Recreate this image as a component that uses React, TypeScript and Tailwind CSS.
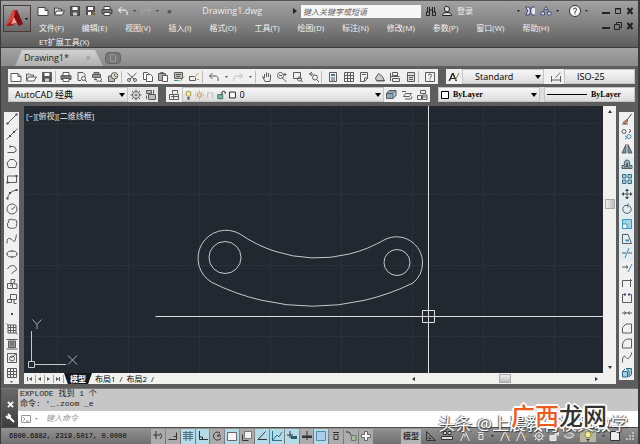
import { ReactNode } from "react";

interface IShape {
  d: string;
  fill?: string;
  stroke?: string;
}

const BLUE = "#3b93b5";
const LIGHT_BLUE = "#9fd3e6";

const shapes: Record<string, IShape[]> = {
  new: [{ d: "M1 2.5h7l3 3v5H1z", fill: "#fafafa" }, { d: "M8 2.5v3h3" }],
  open: [
    { d: "M1.5 10V3h3l1 1h3v2", fill: "#ddd" },
    { d: "M1.5 10l2-4h8l-2.500 4z", fill: "#fafafa" },
  ],
  save: [
    { d: "M1.500 1.500h9v9h-9z", fill: "#555" },
    { d: "M3.500 2h5v3h-5z", fill: "#fff", stroke: "none" },
    { d: "M4 7.500h4v3H4z", fill: "#ccc", stroke: "none" },
  ],
  saveAs: [
    { d: "M1.500 1.500h8v8h-8z", fill: "#555" },
    { d: "M3 2h5v3H3zM3 7h3v3H3z", fill: "#fff", stroke: "none" },
    { d: "M11 5.500l-4 5", stroke: "#d98a2b" },
  ],
  print: [
    { d: "M3 4.500v-3h6v3", fill: "#fff" },
    { d: "M1 4.500h10v4H1z", fill: "#777" },
    { d: "M3 7.500h6v3H3z", fill: "#fff" },
  ],
  preview: [
    { d: "M2 1.500h5l2 2v2M2 1.500v8h3" },
    { d: "M7.500 5.500a2 2 0 1 1 0 4a2 2 0 1 1 0-4M9 9l2 2" },
  ],
  publish: [
    { d: "M3 3.500v-2h5v2M1.500 3.500h8v3h-8z", fill: "#999" },
    { d: "M3 8.500h3M7.500 6.500a2 2 0 1 1 0 3.500a2 2 0 1 1 0-3.500M9 9.500l2 1.500" },
  ],
  print3d: [
    { d: "M1.500 5h6v5.500h-6z", fill: "#bbb" },
    { d: "M7.500 1.500a3 3 0 1 1 0 6.500a3 3 0 1 1 0-6.500z", fill: "#e8dfca" },
    { d: "M7.500 3v2l2 1" },
  ],
  cut: [
    { d: "M1.500 2l7 6.500M10.500 2l-7 6.500" },
    { d: "M1.500 9a1.500 1.500 0 1 1 3 0a1.500 1.500 0 1 1-3 0M7.500 9a1.500 1.500 0 1 1 3 0a1.500 1.500 0 1 1-3 0" },
  ],
  copy: [
    { d: "M1.500 1.500h4l2 2v5h-6z", fill: "#fff" },
    { d: "M4.500 3.500h4l2 2v5h-6z", fill: "#fff" },
  ],
  paste: [
    { d: "M1.500 2.500h7v7h-7zM3.500 1.500h3", fill: "#aaa" },
    { d: "M5.500 4.500h5v6h-5z", fill: "#fff" },
  ],
  match: [
    { d: "M1.500 1.500h8v6h-8z", fill: "#bbb" },
    { d: "M3 3.500h5M3 5.500h4" },
    { d: "M1 9.500h5", stroke: BLUE },
    { d: "M11 5.500l-4 5", stroke: "#b08a3a" },
  ],
  block: [
    { d: "M1.500 9.500v-4h5M1.500 9.500h6v-3" },
    { d: "M10.500 2l-4 4M9 8.500h2", stroke: "#c09040" },
  ],
  undo: [{ d: "M4.500 2L1.500 5l3 3M1.500 5H7q4 0 3 5" }],
  redo: [{ d: "M7.500 2l3 3l-3 3M10.500 5H5q-4 0-3 5" }],
  pan: [{ d: "M3.500 7V3M5.500 6V1.500M7.500 6V2M9.500 7V3.500M3.500 7L1.500 5.500l2.500 5h5l.5-3.500", fill: "#eee" }],
  zoom: [
    { d: "M4.500 1.500a3 3 0 1 1 0 6a3 3 0 1 1 0-6M6.500 7l4 4M3 4.500h3M9 2v3M7.500 3.500h3" },
  ],
  zoomWindow: [{ d: "M1.500 1.500h7v6h-7z" }, { d: "M7.500 6a2 2 0 1 1 0 4a2 2 0 1 1 0-4M9 9.500l2 1.500" }],
  zoomPrev: [
    { d: "M4 1L1.500 3L4 5M1.500 3h4" },
    { d: "M7 4a2.500 2.500 0 1 1 0 5a2.500 2.500 0 1 1 0-5M8.500 8.500l2.500 2.500" },
  ],
  props: [
    { d: "M2.500 1.500h7v9h-7z", fill: "#eee" },
    { d: "M4 3h4v2H4z", fill: "#48759a", stroke: "none" },
    { d: "M4 7h4M4 9h4" },
  ],
  center: [{ d: "M1.500 1.500h9v9h-9zM4.500 1.500v9M7.500 1.500v9M1.500 4.500h9M1.500 7.500h9" }],
  palettes: [{ d: "M2.500 1.500h7v6l-3 3h-4zM6.500 10v-3h3M4 3.500h4" }],
  sheets: [{ d: "M1.500 7l3-4.500l4 3l2 4.500h-8z", fill: "#ccc" }, { d: "M3 9.500h8" }],
  markup: [{ d: "M3.500 1.500h5v3h-5zM1.500 5.500h9M3.500 7.500h7v3h-7zM1.500 2v8" }],
  calc: [{ d: "M2.500 1.500h7v9h-7z", fill: "#ddd" }, { d: "M2.500 4.500h7M4 6.500h4M4 8.500h4" }],
  help: [{ d: "M1.500 1.500h9v9h-9z" }, { d: "M4.500 4.500q0-1.500 1.500-1.500t1.500 1.500t-1.500 2V7.500M6 8.500v1" }],
  styleA: [
    { d: "M1 10L4.500 2L8 10M2.500 7.500h4" },
    { d: "M1.500 10L5 2L8.500 10" },
    { d: "M11 2L7.500 9", stroke: "#8b7c4e" },
  ],
  dim: [{ d: "M1.500 5v6M10.500 5v6M1.500 9h9" }, { d: "M10 1.500L5.500 7", stroke: "#6c7f8b" }],
  gear: [
    { d: "M6 2.500a3.500 3.500 0 1 1 0 7a3.500 3.500 0 1 1 0-7M6 .5v2M6 9.500v2M.5 6h2M9.500 6h2M2 2l1.500 1.500M8.500 8.500L10 10M2 10l1.500-1.500M8.500 3.500L10 2" },
    { d: "M6 5a1 1 0 1 1 0 2a1 1 0 1 1 0-2" },
  ],
  workspace: [{ d: "M1.500 1.500h5v3h-5zM3.500 5.500h7v5h-7z", fill: "#bbb" }, { d: "M8.500 1v4M1.500 6.500v3.500" }],
  layers: [{ d: "M4.500 4.500v-3h5v3M1.500 5.500h4v5h-4zM5.500 5.500h5v5h-5zM3 7.500h7" }],
  bulb: [
    { d: "M6 1.500q3 0 3 3q0 1.500-1.500 3h-3Q3 6 3 4.500q0-3 3-3z", fill: "#f5ef9a", stroke: "#8a8640" },
    { d: "M4.500 9.500h3M5 11h2" },
  ],
  sun: [
    { d: "M6 3.500a2.500 2.500 0 1 1 0 5a2.500 2.500 0 1 1 0-5z", fill: "#f6ddb6", stroke: "#a88b63" },
    { d: "M6 .5v1.500M6 10v1.500M.5 6H2M10 6h1.500M2 2l1 1M9 9l1 1M2 10l1-1M9 3l1-1", stroke: "#a88b63" },
  ],
  viewport: [{ d: "M2.500 3.500h6v6M2.500 3.500v6", stroke: "#c3b3bb" }],
  unlock: [
    { d: "M1.500 5.500h6v5h-6z", fill: "#79b8aa", stroke: "#39645c" },
    { d: "M6.500 5.500v-3q2-2 4 0v2" },
  ],
  square: [{ d: "M2.500 2.500h7v7h-7z", fill: "#fff" }],
  layerBack: [{ d: "M4 1.500h7l-3 3H1.500zM1.500 4.500H8v5H1.500zM8 9.500l3-3v-5", fill: "#87a9bd" }],
  layerPrev: [{ d: "M1 2.500h4M4.500 4.500h6l-2 3h-6zM4 10h6l1-2.500" }],
  layerState: [{ d: "M4.500 1.500h5v3h-5zM1.500 6.500h4v4h-4zM6.500 6h4.500v4.500H6.500zM6.500 8h4" }],
  line: [{ d: "M1.500 10.500l9-9" }, { d: "M.5 9.500h2v2h-2zM9.500.5h2v2h-2z", fill: "#444", stroke: "none" }],
  xline: [{ d: "M.5 11.500l11-11" }, { d: "M3 7h2v2H3zM7 3h2v2H7z", fill: "#444", stroke: "none" }],
  pline: [{ d: "M1.500 9.500H8q3-1 2-3.500T7 3.500H4M4 2v3" }],
  polygon: [{ d: "M4 1.500h4l3 3.500l-1.500 4.500h-7L1 5z" }],
  rect: [{ d: "M1.500 3h9v6.500h-9z" }, { d: "M.5 8.500h2v2h-2zM9.500 2h2v2h-2z", fill: "#444", stroke: "none" }],
  arc: [{ d: "M1.500 10.500q1-7 9-8.500" }, { d: "M.5 9.500h2v2h-2zM3 4h2v2H3zM9.500 1h2v2h-2z", fill: "#444", stroke: "none" }],
  circle: [{ d: "M6 1a5 5 0 1 1 0 10a5 5 0 1 1 0-10M6 5.500v1M6 6l3-2" }],
  cloud: [{ d: "M3 4Q1 1.500 4 1.500q2-1 3 .5q4-1 3.500 2q1 2 0 3q0 4-3.500 3q-2 1-3 0q-3 0-2.500-3Q.5 5 3 4z" }],
  spline: [{ d: "M1 10.500Q1 4 4 5.500t4 3T10.500 1.500" }],
  ellipse: [{ d: "M6 3q5 0 5 3T6 9T1 6t5-3M6 2v2M6 8v2M.5 6h1M10.500 6h1" }],
  ellipseArc: [{ d: "M1.500 6Q3 2.500 6.500 2.500T10.500 7L7.500 9M5.500 10.500l2-1.500" }],
  insert: [{ d: "M1.500 5.500h5v5h-5zM5 5V1.500h4L8 6h3v4.500H7M4 8l4-3.500" }],
  makeBlock: [{ d: "M4.500 1.500h6v5h-6zM1.500 6.500h4v3h-4zM8 6v4.500h2.500" }],
  point: [{ d: "M5 5h2v2H5z", fill: "#444", stroke: "none" }],
  hatch: [{ d: "M2 2h8v8H2zM2 4.500h8M2 7.500h8M4.500 2v8M7.500 2v8M.5 .5l1.500 1.500M10 10l1.500 1.500" }],
  gradient: [{ d: "M2.500 3h7v6.500h-7z", fill: "#999" }, { d: "M.5 1.500h11M.5 11h11M4 5h4M4 7h4" }],
  region: [{ d: "M1.500 1.500h9v9h-9z" }, { d: "M6 4a2.500 2.500 0 1 1 0 5a2.500 2.500 0 1 1 0-5M5 6l5-4" }],
  table: [{ d: "M1.500 1.500h9v9h-9zM1.500 4.500h9M1.500 7.500h9M4.500 1.500v9M7.500 1.500v9" }],
  erase: [
    { d: "M10.500 1L6 7", stroke: "#5f4c3a" },
    { d: "M6 6.500l-4 3l2 1.500l3-3z", fill: "#d68a70", stroke: "#8e5c48" },
    { d: "M1 11h6" },
  ],
  copyObj: [
    { d: "M3 1.500a2 2 0 1 1 0 4a2 2 0 1 1 0-4M8 1.500a1.500 1.500 0 1 1 0 3" },
    { d: "M8 6.500a2 2 0 1 1 0 4a2 2 0 1 1 0-4M4 8a1.500 1.500 0 1 1 0 3", stroke: BLUE },
  ],
  mirror: [{ d: "M5 1.500V10H1zM7 1.500V10h4z", fill: "#6f949f" }],
  offset: [
    { d: "M1 10.500v-3h2.500q-1-5.500 2.500-5.500t2.500 5.500H11v3z", fill: "#8db3be" },
    { d: "M3 9h2.500V5.500h1V9H9" },
  ],
  array: [{ d: "M1.500 1.500h3.500v3.500H1.500zM7 1.500h3.500v3.500H7zM1.500 7h3.500v3.500H1.500zM7 7h3.500v3.500H7z", fill: LIGHT_BLUE, stroke: "#366b80" }],
  move: [
    { d: "M6 2v8M2 6h8" },
    { d: "M6 .5l2 2.500H4zM6 11.500L4 9h4zM.5 6L3 4v4zM11.500 6L9 8V4z", fill: "#444", stroke: "none" },
  ],
  rotate: [{ d: "M8 2.500a4.200 4.200 0 1 1-4 0M4 2.500h3M7 .5v4" }],
  scale: [{ d: "M1.500 1.500h9v9h-9z", fill: LIGHT_BLUE, stroke: BLUE }, { d: "M1.500 6h4.500v4.500H1.500z", fill: "#fff", stroke: BLUE }],
  stretch: [{ d: "M1.500 1.500H7l3.500 9h-9z" }, { d: "M4 6.500h4v2H5z", fill: BLUE, stroke: "none" }],
  trim: [{ d: "M1 6h4M7 6h4" }, { d: "M8 1L4 11", stroke: BLUE }],
  extend: [{ d: "M1 5h6M5 3.500L7 5L5 6.500" }, { d: "M11 2L7 10", stroke: BLUE }],
  breakPt: [{ d: "M1.500 10V3.500h8V10M9.500 2v3M8 3.500h3" }],
  breakObj: [{ d: "M4 2.500H1.500v8h9v-8H8" }, { d: "M3 1.500h2v2H3zM7 1.500h2v2H7z", fill: "#446", stroke: "none" }],
  join: [{ d: "M1 6h10M3 4.500L5 6L3 7.500M9 4.500L7 6l2 1.500" }],
  chamfer: [{ d: "M1.500 11V5.500L5 2h5.500v9z" }],
  fillet: [{ d: "M1.500 11V8Q2 2 8 2h2.500v9z" }],
  blend: [{ d: "M1.500 10.500V7Q3 2 5 5.500T10.500 2V.5" }],
  explode: [{ d: "M1.500 4.500h5v5.500h-5zM5 1.500h5.500v6L8 10V4zM1.500 4.500L4 2", fill: LIGHT_BLUE, stroke: "#286f90" }],
  search: [{ d: "M2.500 2v5M4.500 2v8M7.500 2v8M9.500 2v5M1.500 7h3v3.500h-3zM7.500 7h3v3.500h-3zM4.500 5h3" }],
  user: [{ d: "M6 1.500q2.500 0 2.500 2.500T6 7T3.500 4T6 1.500zM1.500 10.500q0-3 4.500-3t4.500 3z", fill: "#ddd" }],
  exchange: [
    { d: "M1.500 2H5l2 4l-2 4H1.500L4 6zM11 2H8L6 6l2 4h3", fill: "#e4e8f5", stroke: "#36406d" },
  ],
  share: [{ d: "M6 1.500l2 3H4zM1 7h3.500v3H1zM7.500 7H11v3H7.500zM4 5L3 7M8 5l1 2", fill: "#d5dcf0", stroke: "#4a5684" }],
  info: [
    { d: "M6 .5a5.500 5.500 0 1 1 0 11a5.500 5.500 0 1 1 0-11z", fill: "#fafafa" },
    { d: "M4.500 4.500q0-1.500 1.500-1.500t1.500 1.500T6 6.500V8M6 8.500v1", stroke: "#333" },
  ],
  infer: [{ d: "M4 1v8M1 5h7M8 3l2 3l-2 3" }],
  snap: [{ d: "M1.500 9.500h8v-7M6.500 6.500h3" }],
  grid: [{ d: "M1 2.500h10M1 4.500h10M1 6.500h10M1 8.500h10M4 1v10M8 1v10", stroke: "#4d6f7f" }],
  ortho: [{ d: "M2.500 1v8.500H11M2.500 7h3v2.500" }],
  polar: [{ d: "M9 3a4 4 0 1 0 1 5M6 6h4M6 6l3-2" }],
  osnap: [{ d: "M1.500 2.500h9v8h-9z", fill: "#f4f4f4", stroke: "#666" }],
  osnap3d: [{ d: "M1.500 4.500v6h6" }, { d: "M3.500 1.500h7v7h-7z", fill: "#f4f4f4", stroke: "#777" }],
  otrack: [{ d: "M9.500 1.500L2 9.500h9" }],
  ducs: [{ d: "M1.500 1v9.500H11M1.500 10.500L6 5l2 2l3-5", stroke: "#2c6f8f" }],
  dyn: [{ d: "M4 1v7M1 5h6" }, { d: "M5 6h6v3H5z", fill: "#2c5c6e", stroke: "none" }],
  lwt: [{ d: "M6 1v9M1 6h10" }, { d: "M1 6h10v2H1z", fill: "#333", stroke: "none" }],
  tpy: [{ d: "M1.500 1.500h9v9h-9z", fill: "#a9cfea", stroke: "#5b89ae" }],
  quick: [{ d: "M3 2.500h6M4 4.500h4v5H4z" }],
  cycle: [{ d: "M1 2h3l2 3" }, { d: "M6.500 5.500h4.500v5H6.500z", fill: "#a9bda3", stroke: "#5f7f55" }],
  plus: [{ d: "M4.500 1.500h3v3h3v3h-3v3h-3v-3h-3v-3h3z", fill: "#f5f5f5", stroke: "#666" }],
  quickView: [{ d: "M1.500 1.500v9h9zM4 6.500v2h2" }],
  quickDwg: [{ d: "M.5 6.500h11v3H.5zM2.500 1.500h3v3h-3zM7 1.500h3v3H7z", fill: "#ddd" }],
  annoScale: [{ d: "M6 1L1.500 11M6 1l4.500 10M6 4v3" }],
  annoStar: [{ d: "M6 1L1.500 11M6 1l4.500 10", stroke: "#eee" }, { d: "M8 4l1 2l2 .5l-1.500 1.500", fill: "#f3d254", stroke: "#b8982a" }],
  lock: [{ d: "M2 5.500h6v5H2zM7 5V2.500h3.500v3", fill: "#ddd" }],
  hardware: [{ d: "M1.500 5a4.500 3 0 0 0 9 0a4.500 3 0 0 0-6-2", fill: "#999" }],
  clean: [{ d: "M1.500 1.500h9v9h-9z", fill: "#eee" }],
};

function Icon({ name, className = "size-3" }: { name: string; className?: string }) {
  return (
    <svg viewBox="0 0 12 12" className={`shrink-0 ${className}`} fill="none" aria-hidden="true">
      {shapes[name].map((shape, i) => (
        <path key={i} d={shape.d} fill={shape.fill ?? "none"} stroke={shape.stroke ?? "currentColor"} />
      ))}
    </svg>
  );
}

function Caret({ small = false, className = "" }: { small?: boolean; className?: string }) {
  return (
    <svg
      viewBox="0 0 6 4"
      className={`shrink-0 pointer-events-none ${small ? "w-[3px] h-[2px]" : "w-[6px] h-1"} ${className}`}
      aria-hidden="true"
    >
      <path d="M0 0h6L3 4z" fill="currentColor" />
    </svg>
  );
}

function ScrollArrow({ className }: { className: string }) {
  return (
    <svg viewBox="0 0 4 4" className={`size-1 shrink-0 text-[#333] ${className}`} aria-hidden="true">
      <path d="M0 1h4L2 4z" fill="currentColor" />
    </svg>
  );
}

function ToolButton({ name, className = "" }: { name: string; className?: string }) {
  return (
    <button aria-label={name} className={`flex-1 min-w-0 min-h-0 flex justify-center items-center ${className}`}>
      <Icon name={name} />
    </button>
  );
}

interface IPicker {
  label: string;
  value: string;
  before?: ReactNode;
  arrow?: boolean;
  className?: string;
  selectClassName?: string;
}

function Picker({ label, value, before, arrow = true, className = "", selectClassName = "text-[9px]" }: IPicker) {
  return (
    <div
      className={`h-full min-w-0 flex items-center border border-[#c4c4c4] bg-gradient-to-b from-[#f6f6f6] to-[#dcdcdc] text-black ${className}`}
    >
      {before}
      <select
        aria-label={label}
        className={`flex-1 min-w-0 h-full appearance-none bg-transparent outline-none leading-3 ${selectClassName}`}
      >
        <option>{value}</option>
      </select>
      {arrow && <Caret className="mr-[2px]" />}
    </div>
  );
}

const menus = [
  "文件(F)",
  "编辑(E)",
  "视图(V)",
  "插入(I)",
  "格式(O)",
  "工具(T)",
  "绘图(D)",
  "标注(N)",
  "修改(M)",
  "参数(P)",
  "窗口(W)",
  "帮助(H)",
  "ET扩展工具(X)",
];

// "|" is a separator, "." a small drop-down arrow
const standardTools =
  "new open save | print preview publish print3d | cut copy paste match block | undo . redo . | pan zoom zoomWindow zoomPrev | props center palettes sheets markup calc | help".split(
    " ",
  );

const drawTools =
  "line xline pline polygon rect arc circle cloud spline ellipse ellipseArc insert makeBlock point hatch gradient region table".split(
    " ",
  );

const modifyTools =
  "erase copyObj mirror offset array move rotate scale stretch trim extend breakPt breakObj join chamfer fillet blend explode".split(
    " ",
  );

const statusTools = [
  { name: "infer", on: false },
  { name: "snap", on: false },
  { name: "grid", on: true },
  { name: "ortho", on: true },
  { name: "polar", on: false },
  { name: "osnap", on: true },
  { name: "osnap3d", on: false },
  { name: "otrack", on: true },
  { name: "ducs", on: true },
  { name: "dyn", on: true },
  { name: "lwt", on: false },
  { name: "tpy", on: true },
  { name: "quick", on: false },
  { name: "cycle", on: false },
  { name: "plus", on: false },
];

function WindowButtons({ restore = false }: { restore?: boolean }) {
  return (
    <div className="flex items-center gap-1 text-[#222]">
      <button aria-label="Minimize">
        <svg viewBox="0 0 8 8" className="size-2">
          <path d="M0 5h8v2H0z" fill="currentColor" />
        </svg>
      </button>
      <button aria-label={restore ? "Restore" : "Maximize"}>
        <svg viewBox="0 0 8 8" className="size-2" fill="none" stroke="currentColor">
          {restore ? <path d="M2.500 2.500v-2h5v5h-2M.5 2.500h5v5h-5z" /> : <path d="M1.500 1.500h5v5h-5zM1 2h6" />}
        </svg>
      </button>
      <button aria-label="Close">
        <svg viewBox="0 0 8 8" className="size-2" fill="none" stroke="currentColor" strokeWidth="2">
          <path d="M1.500 1l5 6M6.500 1l-5 6" />
        </svg>
      </button>
    </div>
  );
}

function TitleBar() {
  return (
    <header className="h-12 pl-[2px] pr-1 pt-1 flex items-start border-t border-b border-t-[#555] border-b-[#3c3c3c] bg-gradient-to-b from-[#a2a2a2] via-[#828282] to-[#5c5c5c]">
      <button
        aria-label="AutoCAD"
        className="w-7 h-[27px] shrink-0 border border-[#4a3a3a] bg-gradient-to-b from-[#a0a0a0] to-[#686868] flex items-center gap-px"
      >
        <svg viewBox="0 0 20 20" className="size-5">
          <path d="M2 17L9 1h4l6 14-4 2-2-3-6 3z" fill="#a31b1d" />
          <path d="M9 1h2l-1 8-8 8z" fill="#e2453b" />
          <path d="M10 8l3 6-6 1z" fill="#f0a295" />
          <path d="M13 1l6 14-4 2-5-9z" fill="#7d1214" />
        </svg>
        <Caret small />
      </button>
      <div className="flex-1 min-w-0 pl-1">
        <div className="h-3 flex items-center text-[#444]">
          <div className="flex items-center gap-1 pl-[2px]">
            {["new", "open", "save", "saveAs", "print", "undo"].map((name) => (
              <button key={name} aria-label={name} className={name === "undo" ? "text-white" : ""}>
                <Icon name={name} />
              </button>
            ))}
            <Caret small />
            <button aria-label="redo" className="text-[#aaa]">
              <Icon name="redo" />
            </button>
            <Caret small />
            <button aria-label="More" className="ml-1 text-[9px] leading-3 text-[#222]">
              »
            </button>
          </div>
          <h1 className="flex-1 text-center text-[9px] leading-3 text-[#ececec]">Drawing1.dwg</h1>
          <svg viewBox="0 0 4 6" className="w-1 h-[6px] mr-1">
            <path d="M0 0l4 3-4 3z" fill="#222" />
          </svg>
          <input
            type="text"
            aria-label="Search"
            placeholder="键入关键字或短语"
            className="w-[120px] h-[13px] px-[2px] bg-[#f7f7f7] text-[8px] italic text-black placeholder:text-[#666] outline-none"
          />
          <div className="pl-1 flex items-center gap-1 text-[#222]">
            <Icon name="search" />
            <Icon name="user" />
            <button className="w-14 text-left text-[8px] leading-3 text-[#eee]">登录</button>
            <Caret small />
            <Icon name="exchange" />
            <Icon name="share" />
            <Caret small />
          </div>
          <div className="pl-[10px] pr-[14px] flex items-center gap-1 text-[#333]">
            <Icon name="info" />
            <Caret small />
          </div>
          <WindowButtons />
        </div>
        <div className="flex items-start">
          <nav className="flex-1 pl-1 pr-8 pt-1 flex flex-wrap gap-x-[18px] text-[8px] leading-[14px] text-[#f2f2f2]">
            {menus.map((menu) => (
              <button key={menu} className="whitespace-nowrap">
                {menu}
              </button>
            ))}
          </nav>
          <div className="pt-[5px]">
            <WindowButtons restore />
          </div>
        </div>
      </div>
    </header>
  );
}

function Toolbars() {
  return (
    <div className="pl-[7px] pr-[3px] pt-[3px] pb-1 flex flex-col gap-[3px] bg-[#5d5d5d] text-[#5c5c5c]">
      <div className="h-[15px] flex gap-2">
        <div className="w-[430px] flex items-center bg-[#f0f0f0]">
          {standardTools.map((tool, i) => {
            if (tool === "|") return <span key={i} className="w-1 h-3 border-l border-[#bbb]"></span>;
            if (tool === ".") return <Caret key={i} small className="mx-[3px]" />;
            return <ToolButton key={i} name={tool} className={tool === "redo" ? "text-[#bbb]" : ""} />;
          })}
        </div>
        <div className="flex-1 min-w-0 flex items-center bg-[#f0f0f0]">
          <div className="w-4 flex text-[#222]">
            <ToolButton name="styleA" />
          </div>
          <Picker label="Text style" value="Standard" className="w-[82px]" selectClassName="pl-3 text-[9px]" />
          <div className="w-5 pl-1 flex">
            <ToolButton name="dim" />
          </div>
          <Picker
            label="Dimension style"
            value="ISO-25"
            arrow={false}
            className="flex-1"
            selectClassName="pl-3 text-[9px]"
          />
        </div>
      </div>
      <div className="h-[15px] flex gap-2">
        <div className="w-[150px] flex bg-[#e6e6e6]">
          <Picker label="Workspace" value="AutoCAD 经典" className="w-[120px]" selectClassName="pl-[6px] text-[9px]" />
          <ToolButton name="gear" />
          <ToolButton name="workspace" />
        </div>
        <div className="w-[264px] flex bg-[#f0f0f0]">
          <ToolButton name="layers" />
          <Picker
            label="Layer"
            value="0"
            className="w-[202px]"
            selectClassName="pl-[2px] text-[9px]"
            before={["bulb", "sun", "viewport", "unlock", "square"].map((name) => (
              <Icon key={name} name={name} className="w-[11px] h-[10px]" />
            ))}
          />
          <ToolButton name="layerBack" />
          <ToolButton name="layerPrev" />
          <ToolButton name="layerState" />
        </div>
        <div className="flex-1 min-w-0 flex gap-1 bg-[#ddd] font-['Liberation_Serif','Noto_Sans_CJK_SC',serif] font-bold">
          <Picker
            label="Color"
            value="ByLayer"
            className="w-[102px]"
            selectClassName="pl-[2px] text-[8px]"
            before={<Icon name="square" />}
          />
          <Picker
            label="Linetype"
            value="ByLayer"
            arrow={false}
            className="flex-1"
            selectClassName="text-[8px]"
            before={<span className="w-10 ml-[2px] mr-1 border-t border-black"></span>}
          />
        </div>
      </div>
    </div>
  );
}

function Drawing() {
  return (
    <div className="relative flex-1 min-w-0 bg-[#212830]">
      <svg className="absolute inset-0 size-full" fill="none">
        <defs>
          <pattern id="grid" width="71" height="71" x="33" y="17" patternUnits="userSpaceOnUse">
            <path
              d="M14.500 0v71M28.500 0v71M42.500 0v71M56.500 0v71M0 14.500h71M0 28.500h71M0 42.500h71M0 56.500h71"
              stroke="#232a33"
            />
            <path d="M.5 0v71M0 .5h71" stroke="#29313a" />
          </pattern>
        </defs>
        <rect width="100%" height="100%" fill="url(#grid)" />
        <g transform="translate(-24 -106)">
          <path
            d="M212 282.500A28 28 0 1 1 240 234A135 135 0 0 0 385 239.500A26 26 0 0 1 422.500 263A26 26 0 0 1 413 283A227 227 0 0 1 212 282.500z"
            stroke="#c6c9cc"
          />
          <circle cx="225" cy="257.500" r="16" stroke="#c6c9cc" />
          <circle cx="397" cy="262.500" r="13" stroke="#c6c9cc" />
          <path d="M428.500 106v300M155.500 316.500H1400M422.500 310.500h12v12h-12z" stroke="#dcdee0" />
          <path d="M28.500 361.500h6v6h-6zM31.500 331v30M35 364.500h31" stroke="#c6c9cc" />
          <path d="M32.500 319.500l4.500 5l4.500-5M37 324.500v4.500M68 355.500l9 9M77 355.500l-9 9" stroke="#a4a8ac" />
        </g>
      </svg>
      <p className="relative pl-[2px] pt-1 text-[8px] leading-3 text-[#e4e6e8]">[−][俯视][二维线框]</p>
    </div>
  );
}

function Workspace() {
  return (
    <main className="flex-1 min-h-0 flex bg-[#5d5d5d] text-[#5c5c5c]">
      <aside className="w-[15px] ml-[3px] mr-[5px] mt-[6px] flex flex-col items-stretch bg-[#f0f0f0]">
        {drawTools.map((tool) => (
          <ToolButton key={tool} name={tool} />
        ))}
        <Caret small className="mx-auto mb-px" />
      </aside>
      <div className="flex-1 min-w-0 flex flex-col">
        <div className="flex-1 min-h-0 flex">
          <Drawing />
          <div className="w-[13px] py-1 flex flex-col items-center justify-between bg-[#f1f1ef]">
            <ScrollArrow className="rotate-180" />
            <span className="w-[10px] h-[10px] mb-[72px] border border-[#aaa] bg-gradient-to-r from-[#eee] to-[#bbb]"></span>
            <ScrollArrow className="" />
          </div>
        </div>
        <div className="h-[11px] pl-[2px] flex items-center bg-[#f1f1ef] text-[8px] leading-[11px] text-black">
          <svg viewBox="0 0 38 8" className="w-[38px] h-2" fill="#555">
            <path d="M1 2h1v4H1zM6 2v4L3 4zM15 2v4l-3-2zM21 2l3 2-3 2zM30 2l3 2-3 2zM33 2h1v4h-1zM9 0h.500v8H9zM18 0h.500v8H18zM27 0h.500v8H27zM37 0h.500v8H37z" />
          </svg>
          <button className="w-[28px] h-full bg-[#15181c] font-bold text-white [clip-path:polygon(0_0,100%_0,86%_100%,14%_100%)]">
            模型
          </button>
          <button className="pl-[3px]">布局1</button>
          <span className="px-1">/</span>
          <button>布局2</button>
          <span className="px-1">/</span>
          <div className="flex-1 pl-[254px] flex items-center justify-between">
            <ScrollArrow className="rotate-90" />
            <span className="w-3 h-[9px] border border-[#aaa] bg-gradient-to-b from-[#eee] to-[#bbb]"></span>
            <ScrollArrow className="-rotate-90" />
          </div>
          <span className="w-[18px]"></span>
        </div>
      </div>
      <aside className="w-[15px] ml-[3px] mr-1 mt-[6px] mb-1 flex flex-col bg-[#f0f0f0]">
        {modifyTools.map((tool, i) => (
          <ToolButton key={tool} name={tool} className={i > 2 && i < 10 ? "bg-[#e2edf2]" : ""} />
        ))}
      </aside>
    </main>
  );
}

function CommandLine() {
  return (
    <section className="mt-1 flex border-t border-[#777] font-['Liberation_Mono','Noto_Sans_CJK_SC',monospace]">
      <div className="w-4 ml-px pt-3 pb-1 flex flex-col items-center justify-between bg-gradient-to-b from-[#6b6b6b] to-[#3f3f3f] text-white">
        <svg viewBox="0 0 8 8" className="size-[7px]" stroke="currentColor" strokeWidth="2">
          <path d="M1 1l6 6M7 1L1 7" />
        </svg>
        <svg viewBox="0 0 10 10" className="size-[10px]" fill="none" stroke="currentColor" strokeWidth="2">
          <path d="M4 4l5 5M1 3l2 2 2-2-2-2" />
        </svg>
      </div>
      <div className="flex-1 min-w-0">
        <div className="h-[22px] px-[2px] bg-[#c6c6c6] text-[8px] leading-[10px] text-[#222]">
          <p>EXPLODE 找到 1 个</p>
          <p>命令: '_.zoom _e</p>
        </div>
        <div className="h-4 px-[3px] flex items-center gap-1 bg-white text-[#999]">
          <svg viewBox="0 0 10 8" className="w-[10px] h-2" fill="none" stroke="currentColor">
            <path d="M.5.5h9v7h-9zM2 2l2 2-2 2M5 6h3" />
          </svg>
          <Caret small />
          <input
            type="text"
            aria-label="Command"
            placeholder="键入命令"
            className="flex-1 min-w-0 pl-1 text-[8px] leading-3 italic text-black placeholder:text-[#999] outline-none"
          />
        </div>
      </div>
    </section>
  );
}

function StatusBar() {
  return (
    <footer className="h-[17px] flex items-center bg-gradient-to-b from-[#929292] to-[#707070] border-t border-[#4c4c4c] text-[#333]">
      <p className="w-[150px] pl-2 font-['Liberation_Mono',monospace] text-[7px] leading-3 text-black">
        6800.6882, 2319.5017, 0.0000
      </p>
      <div className="w-[222px] h-[15px] flex gap-px">
        {statusTools.map((tool) => (
          <ToolButton
            key={tool.name}
            name={tool.name}
            className={tool.on ? "bg-[#b3dbe8]" : "bg-[#acacac]"}
          />
        ))}
      </div>
      <div className="flex-1 pl-7 pr-1 flex items-center justify-between">
        <div className="h-[15px] flex items-center gap-1">
          <button className="h-full px-[2px] bg-[#b5b5b5] text-[8px] leading-3 font-bold">模型</button>
          <Icon name="quickView" />
          <Icon name="quickDwg" />
        </div>
        <div className="flex items-center gap-1 text-[#e4e4e4]">
          <Icon name="annoScale" />
          <Icon name="quick" />
          <Caret small className="text-[#222]" />
        </div>
        <div className="flex items-center gap-1">
          <Icon name="annoStar" />
          <Icon name="annoStar" />
        </div>
        <div className="flex items-center gap-[3px] text-[#eee]">
          <Icon name="gear" />
          <Icon name="lock" />
          <Icon name="hardware" />
        </div>
        <span className="px-[2px] bg-[#b5b5a0]">
          <Icon name="bulb" />
        </span>
        <div className="flex items-center gap-1">
          <Caret small />
          <Icon name="clean" />
        </div>
        <svg viewBox="0 0 8 8" className="size-2" fill="#bbb">
          <path d="M6 0h2v2H6zM3 3h2v2H3zM6 3h2v2H6zM0 6h2v2H0zM3 6h2v2H3zM6 6h2v2H6z" />
        </svg>
      </div>
    </footer>
  );
}

export default function App() {
  return (
    <div className="relative min-h-screen flex flex-col border-l border-r-2 border-[#3b3b3b] bg-[#5d5d5d] font-['Open_Sans','Noto_Sans_CJK_SC',sans-serif] cursor-default overflow-hidden">
      <TitleBar />
      <div className="h-[18px] pl-[14px] flex items-end bg-gradient-to-b from-[#a3a3a3] to-[#8b8b8b]">
        <button className="w-[88px] h-4 pl-[9px] pr-2 flex items-center justify-between bg-gradient-to-b from-[#d2d2d2] to-[#b0b0b0] text-[9px] leading-3 text-[#222] [clip-path:polygon(7px_0,80px_0,100%_100%,0_100%)]">
          Drawing1*
          <span className="pr-1 text-[#888]">×</span>
        </button>
        <button
          aria-label="New tab"
          className="w-4 h-3 mb-[2px] ml-[2px] rounded-sm bg-[#777] border border-[#666] flex justify-center items-center text-[#999]"
        >
          <svg viewBox="0 0 8 8" className="size-2" fill="none" stroke="currentColor">
            <path d="M1.500.5h3l2 2v5h-5z" />
          </svg>
        </button>
      </div>
      <Toolbars />
      <Workspace />
      <CommandLine />
      <StatusBar />
      <p className="absolute right-[10px] bottom-[10px] text-[17px] leading-5 whitespace-nowrap text-white [text-shadow:1px_1px_1px_#333,-1px_0_1px_#555]">
        头条 @上晨教育模具教学
      </p>
      <p className="absolute right-[31px] bottom-[14px] text-[24px] leading-7 font-medium whitespace-nowrap text-[#333] [text-shadow:2px_0_#fff,-2px_0_#fff,0_2px_#fff,0_-2px_#fff,1px_1px_#fff,-1px_-1px_#fff,1px_-1px_#fff,-1px_1px_#fff]">
        <span className="text-[#ee5a1c]">广西</span>龙网
      </p>
    </div>
  );
}
